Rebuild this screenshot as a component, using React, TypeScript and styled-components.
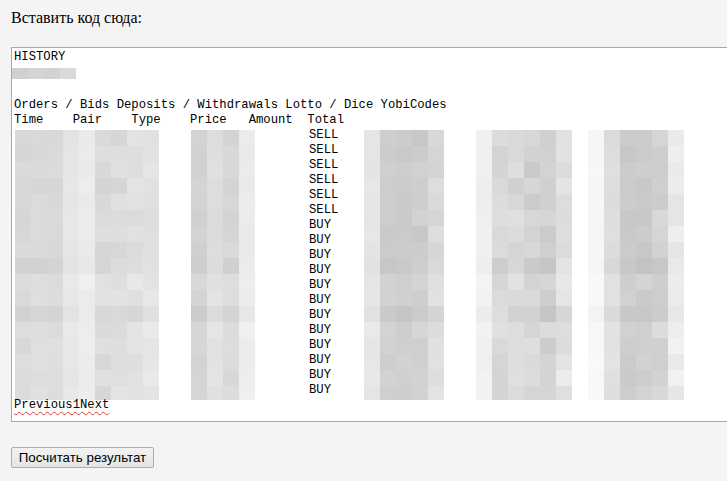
import React from "react";
import styled, { createGlobalStyle } from "styled-components";

const GlobalStyle = createGlobalStyle`
  html, body {
    margin: 0;
    padding: 0;
    background: #f4f4f4;
    overflow: hidden;
  }
`;

const Page = styled.div`
  display: flex;
  flex-direction: column;
  align-items: flex-start;
  padding: 9px 0 0 11px;
`;

const Label = styled.div`
  font-family: "Liberation Serif", "Times New Roman", serif;
  font-size: 16px;
  line-height: 18px;
  color: #000;
  margin-bottom: 20px;
`;

const Editor = styled.div`
  box-sizing: border-box;
  flex-shrink: 0;
  width: 740px;
  height: 375px;
  background: #fff;
  border: 1px solid #a9a9a9;
  padding: 2px 2px;
  font-family: "Liberation Mono", "Courier New", monospace;
  font-size: 12.22px;
  line-height: 15px;
  color: #000;
  overflow: hidden;
`;

const Line = styled.div`
  height: 15px;
  white-space: pre;
`;

const Pager = styled(Line)`
  text-decoration: underline wavy #e0403a;
  text-decoration-thickness: 1px;
  text-underline-offset: 3px;
  text-decoration-skip-ink: none;
`;

const Table = styled.div`
  display: flex;
  align-items: flex-start;
  height: 270px;
`;

const TypeCol = styled.div`
  width: 55px;
  padding-left: 54px;
  flex-shrink: 0;
`;

const Grid = styled.div<{ $cols: number; $rowH: number; $h: number; $ml?: number; $mt?: number }>`
  display: grid;
  flex-shrink: 0;
  grid-template-columns: repeat(${(p) => p.$cols}, 16px);
  grid-auto-rows: ${(p) => p.$rowH}px;
  height: ${(p) => p.$h}px;
  overflow: hidden;
  margin-left: ${(p) => p.$ml ?? 0}px;
  margin-top: ${(p) => p.$mt ?? 0}px;
`;

const Cell = styled.div``;

const Button = styled.button`
  margin-top: 25px;
  width: 143px;
  height: 21px;
  padding: 0 6px;
  font-family: "Liberation Sans", Arial, sans-serif;
  font-size: 13.33px;
  color: #000;
  background: linear-gradient(#f3f3f3, #e4e4e4);
  border: 1px solid #acacac;
  border-radius: 2px;
  white-space: nowrap;
`;

const rnd = (i: number) => {
  const x = Math.sin(i * 12.9898 + 78.233) * 43758.5453;
  return x - Math.floor(x);
};

const grey = (v: number, tint = 0) => {
  const c = (n: number) => Math.max(0, Math.min(255, Math.round(n)));
  return `rgb(${c(v + tint)}, ${c(v)}, ${c(v + 2)})`;
};

type Block = { bases: number[]; jitter: number[]; seed: number; ml: number };

const Mosaic = ({ block, rows }: { block: Block; rows: number }) => {
  const cells: React.ReactNode[] = [];
  for (let r = 0; r < rows; r++) {
    const rowShade = r === 8 || r === 11 ? -6 : r < 8 ? -2 : 2;
    block.bases.forEach((b, c) => {
      const j = (rnd(block.seed + r * 31 + c * 7) - 0.5) * 2 * block.jitter[c];
      const v = b + j + (block.jitter[c] > 2 ? rowShade : rowShade / 2);
      cells.push(<Cell key={`${r}-${c}`} style={{ background: grey(v, c === 0 ? 1 : 0) }} />);
    });
  }
  return (
    <Grid $cols={block.bases.length} $rowH={16} $h={270} $ml={block.ml} $mt={2}>
      {cells}
    </Grid>
  );
};

const blocks: Block[] = [
  { bases: [216, 219, 219, 230, 236, 218, 221, 224, 228], jitter: [3, 3, 3, 2, 2, 6, 6, 6, 4], seed: 1, ml: 1 },
  { bases: [210, 224, 216, 236], jitter: [3, 3, 3, 2], seed: 50, ml: 32 },
];

const rightBlocks: Block[] = [
  { bases: [229, 206, 205, 207, 220], jitter: [2, 3, 3, 8, 6], seed: 100, ml: 0 },
  { bases: [239, 218, 218, 212, 210, 226], jitter: [2, 10, 10, 10, 10, 8], seed: 200, ml: 32 },
  { bases: [246, 223, 204, 205, 211, 234], jitter: [1, 3, 4, 6, 8, 6], seed: 300, ml: 16 },
];

const rowsData = [
  "SELL", "SELL", "SELL", "SELL", "SELL", "SELL",
  "BUY", "BUY", "BUY", "BUY", "BUY", "BUY",
  "BUY", "BUY", "BUY", "BUY", "BUY", "BUY",
];

const historyCells = [206, 211, 209, 217];

const App = () => {
  return (
    <>
      <GlobalStyle />
      <Page>
        <Label>Вставить код сюда:</Label>
        <Editor>
          <Line>HISTORY</Line>
          <Line>
            <Grid $cols={4} $rowH={11} $h={11} $ml={-2} $mt={3}>
              {historyCells.map((v, i) => (
                <Cell key={i} style={{ background: grey(v, 1) }} />
              ))}
            </Grid>
          </Line>
          <Line> </Line>
          <Line>Orders / Bids Deposits / Withdrawals Lotto / Dice YobiCodes</Line>
          <Line>{"Time    Pair    Type    Price   Amount  Total"}</Line>
          <Table>
            {blocks.map((b, i) => (
              <Mosaic key={i} block={b} rows={17} />
            ))}
            <TypeCol>
              {rowsData.map((t, i) => (
                <Line key={i}>{t}</Line>
              ))}
            </TypeCol>
            {rightBlocks.map((b, i) => (
              <Mosaic key={i} block={b} rows={17} />
            ))}
          </Table>
          <Pager>Previous1Next</Pager>
        </Editor>
        <Button>Посчитать результат</Button>
      </Page>
    </>
  );
};

export default App;
